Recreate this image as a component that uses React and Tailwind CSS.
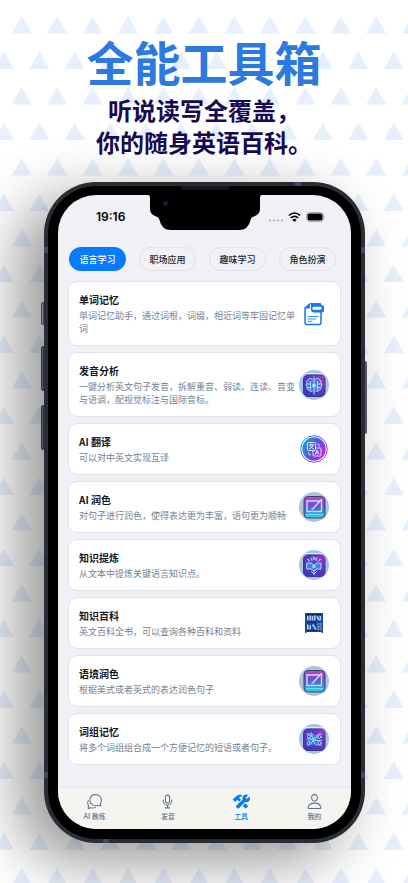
import React from "react";
import {
    IoChatbubblesOutline,
    IoMicOutline,
    IoConstruct,
    IoPersonOutline,
} from "react-icons/io5";

const tabs = ["语言学习", "职场应用", "趣味学习", "角色扮演"];

const tools = [
    { title: "单词记忆", text: "单词记忆助手，通过词根，词缀，相近词等牢固记忆单词", Icon: NoteIcon },
    { title: "发音分析", text: "一键分析英文句子发音，拆解重音、弱读、连读、音变与语调，配视觉标注与国际音标。", Icon: BrainIcon },
    { title: "AI 翻译", text: "可以对中英文实现互译", Icon: TranslateIcon },
    { title: "AI 润色", text: "对句子进行润色，使得表达更为丰富，语句更为顺畅", Icon: PolishIcon },
    { title: "知识提炼", text: "从文本中提炼关键语言知识点。", Icon: BookIcon },
    { title: "知识百科", text: "英文百科全书，可以查询各种百科和资料", Icon: ShelfIcon },
    { title: "语境润色", text: "根据美式或者英式的表达润色句子", Icon: PolishIcon },
    { title: "词组记忆", text: "将多个词组组合成一个方便记忆的短语或者句子。", Icon: CircuitIcon },
];

const navItems = [
    { label: "AI 教练", Icon: IoChatbubblesOutline },
    { label: "发音", Icon: IoMicOutline },
    { label: "工具", Icon: IoConstruct, active: true },
    { label: "我的", Icon: IoPersonOutline },
];

function NoteIcon() {
    return (
        <svg viewBox="0 0 30 30" className="size-[30px] shrink-0" fill="none" aria-hidden="true">
            <path d="M11 4.700L6 9v14.500q0 2 2 2h12q2 0 2-2V14" stroke="#1477f5" strokeWidth="1.500" />
            <path d="M5.500 9.500L11 4v5.500z" fill="#1477f5" />
            <path d="M11 4h10q1.500 0 1.500 2 2.500 0 2.500 2.500v3q0 2-2 2V15l-2-1.500h-6q-3 0-3-3V6z" fill="#1477f5" />
            <rect x="13.500" y="7.800" width="9" height="3" rx=".8" fill="#fff" />
            <path d="M8.500 17.500h11M8.500 20h8.500M8.500 22.300h5" stroke="#3c8df5" />
        </svg>
    );
}

/* Pale disc with a rounded purple tile, shared by the neon icons */
function NeonTile({ children }) {
    return (
        <svg viewBox="0 0 30 30" className="size-[30px] shrink-0" fill="none" aria-hidden="true">
            <defs>
                <linearGradient id="neon" x1="1" y1="0" x2="0" y2="1">
                    <stop offset="0" stopColor="#c42fc0" />
                    <stop offset=".35" stopColor="#6535c4" />
                    <stop offset="1" stopColor="#3a36b4" />
                </linearGradient>
            </defs>
            <circle cx="15" cy="15" r="15" fill="#a6c3e6" />
            <path d="M6 3.500h18" stroke="#dfeaf8" />
            <rect x="4.500" y="5" width="21.500" height="21.500" rx="4.500" fill="url(#neon)" stroke="#353a86" />
            {children}
        </svg>
    );
}

function BrainIcon() {
    return (
        <NeonTile>
            <circle cx="15" cy="15.500" r="7" fill="#4fa8f5" opacity=".5" />
            <g stroke="#a5e2ff" strokeLinecap="round">
                <path d="M15 7v17M13 9q-3-2-3.500 1Q7 10 8 13q-2 2 0 4-.5 3 2 3 1 3 3 1M17 9q3-2 3.500 1 2.500 0 1.500 3 2 2 0 4 .5 3-2 3-1 3-3 1" />
                <path d="M8 14h3M9 17.500h3M19 14h3M18 17.500h3M11.500 11.500v8M18.500 11.500v8" />
            </g>
            <circle cx="15" cy="15.500" r="2" fill="#8cf4ff" />
        </NeonTile>
    );
}

function BookIcon() {
    return (
        <NeonTile>
            <path d="M8 13h4l3 2 3-2h4v6h-4l-3 2-3-2H8z" fill="#4fa8f5" opacity=".6" />
            <g stroke="#a0dcff" strokeLinecap="round">
                <path d="M8 13h4l3 2 3-2h4v6h-4l-3 2-3-2H8zM15 21v3.500M12.500 21.500l2.500 2.500 2.500-2.500" />
                <path d="M9 10l2 1.500M21 10l-2 1.500M12 8l1 3M18 8l-1 3" />
                <circle cx="15" cy="8.500" r="1.300" />
            </g>
            <circle cx="9" cy="9.500" r=".8" fill="#c6eaff" />
            <circle cx="21" cy="9.500" r=".8" fill="#c6eaff" />
            <circle cx="15" cy="16.500" r="1.800" fill="#65f0ff" />
        </NeonTile>
    );
}

function CircuitIcon() {
    return (
        <NeonTile>
            <circle cx="14.500" cy="15.500" r="5.500" fill="#4fa8f5" opacity=".45" />
            <g stroke="#98d6ff" strokeLinecap="round">
                <path d="M8 10h3.500l2.500 4h3l2-4h3.500M8 15h4l2 1.500h8.500M8 21h3l3-4 3 4h5.500M12 8.500l2 3" />
                <circle cx="10" cy="12.500" r="1.700" />
                <circle cx="20.500" cy="13" r="1.500" />
                <circle cx="9.500" cy="18.500" r="1.500" />
                <circle cx="20.500" cy="19" r="1.500" />
            </g>
            <circle cx="14.500" cy="15.500" r="2" fill="#4fe0ff" />
        </NeonTile>
    );
}

function TranslateIcon() {
    return (
        <svg viewBox="0 0 30 30" className="size-[30px] shrink-0" fill="none" aria-hidden="true">
            <defs>
                <linearGradient id="trans" x1="0" y1=".2" x2="1" y2=".8">
                    <stop offset="0" stopColor="#19a4e3" />
                    <stop offset=".5" stopColor="#5a57d8" />
                    <stop offset="1" stopColor="#c51fe0" />
                </linearGradient>
            </defs>
            <circle cx="15" cy="15" r="13.300" stroke="url(#trans)" />
            <circle cx="15" cy="15" r="11.700" fill="url(#trans)" />
            <g stroke="#fff" strokeWidth=".8">
                <rect x="8.500" y="8.500" width="8" height="8" rx="1" />
                <path d="M16.500 14h4.500q1 0 1 1v6q0 1-1 1h-6q-1 0-1-1v-4.500" />
                <path d="M10 10.800h5M12.500 9.800v1M14 11q-.8 3-4 4M11 11q1 3 4 4M16.200 20.500l1.800-4.500 1.800 4.500M17 19h2" />
                <path d="M18.500 10q2 0 2 2.500M9.500 18.500q0 2.500 2.500 2.500" />
            </g>
        </svg>
    );
}

function PolishIcon() {
    return (
        <svg viewBox="0 0 30 30" className="size-[30px] shrink-0" fill="none" aria-hidden="true">
            <defs>
                <linearGradient id="polish" x1="0" y1="0" x2="0" y2="1">
                    <stop offset="0" stopColor="#e03bb4" />
                    <stop offset=".35" stopColor="#7a4bd0" />
                    <stop offset=".7" stopColor="#3f7fd2" />
                    <stop offset="1" stopColor="#3ad6e4" />
                </linearGradient>
            </defs>
            <circle cx="15" cy="15" r="15" fill="#b1c3d8" />
            <rect x="5" y="4.500" width="21" height="21.500" rx="4" fill="url(#polish)" stroke="#2f4680" />
            <path d="M21 9H8v10.500h14.500V7.500" stroke="#b9e2ff" strokeWidth="1.400" />
            <path d="M14 16.500l8.500-9M12.500 17.500l2.500-1" stroke="#d0ebff" strokeWidth="1.200" />
            <path d="M7 22.500h17" stroke="#5ee8f2" strokeWidth="1.200" />
        </svg>
    );
}

function ShelfIcon() {
    return (
        <svg viewBox="0 0 30 30" className="size-[30px] shrink-0" fill="none" aria-hidden="true">
            <path d="M6 5h18v20h-1.500v-1h-15v1H6z" fill="#1a46a3" />
            <path d="M8 14h14M8 22.500h14M8 6.500h14" stroke="#0c2763" />
            <g stroke="#a9cdf3" strokeWidth="1.600">
                <path d="M8.800 12.500V8M11.200 12.500V7.500M13.500 12.500V8M15.800 12.500V7.500M18 8l2 4.500M21.300 12.500V8" />
                <path d="M8.800 21.500v-5M11.200 21.500v-4M13.500 16.500l3.500 5" />
            </g>
            <path d="M19 14v9M22 14v9M19 16h3M19 18.500h3M19 21h3" stroke="#7594c5" />
        </svg>
    );
}

function Backdrop() {
    return (
        <svg className="absolute inset-0 size-full" aria-hidden="true">
            <defs>
                <pattern id="triangles" width="35.45" height="71" y="16" patternUnits="userSpaceOnUse">
                    <path d="M21.700 0l10 17.500h-20zM3.900 35.500l10 17.500h-20zM39.350 35.500l10 17.500h-20z" fill="#e6effb" />
                </pattern>
            </defs>
            <rect y="16" width="100%" height="100%" fill="url(#triangles)" />
        </svg>
    );
}

function Notch() {
    return (
        <svg viewBox="0 0 114 35" className="absolute top-0 left-1/2 -ml-[57px] h-[35px] w-[114px]" aria-hidden="true">
            <path d="M0 0h114q-2 0-2 3v11q0 5-5 7-4 1-4.500 4-2 10-11.500 10H23q-9.500 0-11.500-10-.5-3-4.500-4-5-2-5-7V3q0-3-2-3z" fill="#000" />
            <circle cx="17.500" cy="8.500" r="3" fill="#10101f" />
            <circle cx="17.500" cy="8.500" r="1.500" fill="#25265c" />
        </svg>
    );
}

function StatusBar() {
    return (
        <div className="flex h-11 items-center justify-between pr-[25px] pl-[38px]">
            <span className="font-['Inter',sans-serif] text-[12px] leading-4 font-semibold text-black">19:16</span>
            <svg viewBox="0 0 58 14" className="h-[14px] w-[58px]" fill="none" aria-hidden="true">
                <g fill="#b9bbc0">
                    <circle cx="2" cy="10.500" r="1.200" />
                    <circle cx="6" cy="10.500" r="1.200" />
                    <circle cx="10" cy="10.500" r="1.200" />
                    <circle cx="14" cy="10.500" r="1.200" />
                </g>
                <path d="M20.800 5.500q5.700-5 11.400 0M22.800 7.900q3.700-3.200 7.400 0" stroke="#000" strokeWidth="1.600" />
                <path d="M24.300 9.700q2.200-1.700 4.400 0l-2.200 2.300z" fill="#000" />
                <rect x="38.500" y="2.500" width="17" height="9" rx="2.800" stroke="#aaacb0" />
                <rect x="39.500" y="3.500" width="15" height="7" rx="1.800" fill="#000" />
                <path d="M56.500 5.500q1.500 1.500 0 3z" fill="#aaacb0" />
            </svg>
        </div>
    );
}

function ToolCard({ title, text, Icon }) {
    return (
        <li>
            <a href="#" className="flex items-center rounded-[9px] border border-[#e2e4e8] bg-white py-[10px] pr-[11px] pl-[10px]">
                <div className="flex flex-1 flex-col gap-[2px]">
                    <h2 className="text-[10px] leading-[15px] font-bold text-[#14181f]">{title}</h2>
                    <p className="text-[9px] leading-[13px] text-[#738196]">{text}</p>
                </div>
                <Icon />
            </a>
        </li>
    );
}

function Phone() {
    return (
        <div className="relative mr-[43px] ml-11 rounded-[52px] bg-[#292d35] p-1 shadow-[-24px_18px_60px_rgba(0,0,0,0.42)]">
            {/* side buttons */}
            <div className="absolute top-[120px] -left-[3px] h-[23px] w-[3px] rounded-l-xs border border-[#43474d] bg-[#85878a]" />
            <div className="absolute top-[164px] -left-[3px] h-[45px] w-[3px] rounded-l-xs border border-[#34383e] bg-[#54575c]" />
            <div className="absolute top-[223px] -left-[3px] h-[45px] w-[3px] rounded-l-xs border border-[#34383e] bg-[#54575c]" />
            <div className="absolute top-[179px] -right-[2px] h-[73px] w-[2px] rounded-r-xs bg-[#55585d]" />
            {/* antenna bands */}
            <div className="absolute top-[65px] left-0 h-[6px] w-[4px] bg-[#414c5b]" />
            <div className="absolute top-[65px] right-0 h-[6px] w-[4px] bg-[#414c5b]" />
            <div className="absolute bottom-[65px] left-0 h-[6px] w-[4px] bg-[#414c5b]" />
            <div className="absolute right-0 bottom-[65px] h-[6px] w-[4px] bg-[#414c5b]" />
            <div className="absolute top-0 right-[64px] h-[4px] w-[6px] bg-[#414c5b]" />
            <div className="absolute bottom-0 left-[59px] h-[4px] w-[6px] bg-[#414c5b]" />
            {/* speaker */}
            <div className="absolute top-1 left-1/2 -ml-[24px] h-[4px] w-12 rounded-b-xs bg-[#17181a]" />

            <div className="rounded-[48px] bg-black px-[10px] pt-[9px] pb-[10px]">
                <div className="relative overflow-hidden rounded-[38px] bg-[#f0f1f6]">
                    <Notch />
                    <StatusBar />
                    <div className="flex gap-[13px] px-[11px] pt-2">
                        {tabs.map((tab, i) => (
                            <button
                                key={tab}
                                type="button"
                                className={
                                    i === 0
                                        ? "h-[24px] w-[57px] rounded-full bg-[#067bfd] text-[9px] leading-[13px] font-medium text-white"
                                        : "h-[24px] w-[57px] rounded-full border border-[#dfe1e5] text-[9px] leading-[13px] font-medium text-[#22262d]"
                                }
                            >
                                {tab}
                            </button>
                        ))}
                    </div>
                    <ul className="flex flex-col gap-[6px] px-[10px] pt-[10px] pb-[22px]">
                        {tools.map((tool) => (
                            <ToolCard key={tool.title} {...tool} />
                        ))}
                    </ul>
                    <nav className="grid grid-cols-4 border-t border-[#e5e7e8] bg-[#f4f5f1] pt-[5px] pb-[8px]">
                        {navItems.map(({ label, Icon, active }) => (
                            <a
                                key={label}
                                href="#"
                                className={
                                    active
                                        ? "flex flex-col items-center gap-[1px] text-[#087bf6]"
                                        : "flex flex-col items-center gap-[1px] text-[#63738a]"
                                }
                            >
                                <Icon className="size-[17px]" />
                                <span className="text-[7px] leading-[10px] font-medium">{label}</span>
                            </a>
                        ))}
                    </nav>
                </div>
            </div>
        </div>
    );
}

export default function App() {
    return (
        <main className="relative min-h-screen overflow-hidden bg-white pb-10 font-['Noto_Sans_CJK_SC',sans-serif]">
            <Backdrop />
            <header className="relative pt-7 pb-6 text-center">
                <h1 className="text-[47px] leading-[66px] font-bold text-[#2c79df]">全能工具箱</h1>
                <p className="text-[24px] leading-[32px] font-bold text-[#160a52]">
                    听说读写全覆盖，
                    <br />
                    你的随身英语百科。
                </p>
            </header>
            <Phone />
        </main>
    );
}
